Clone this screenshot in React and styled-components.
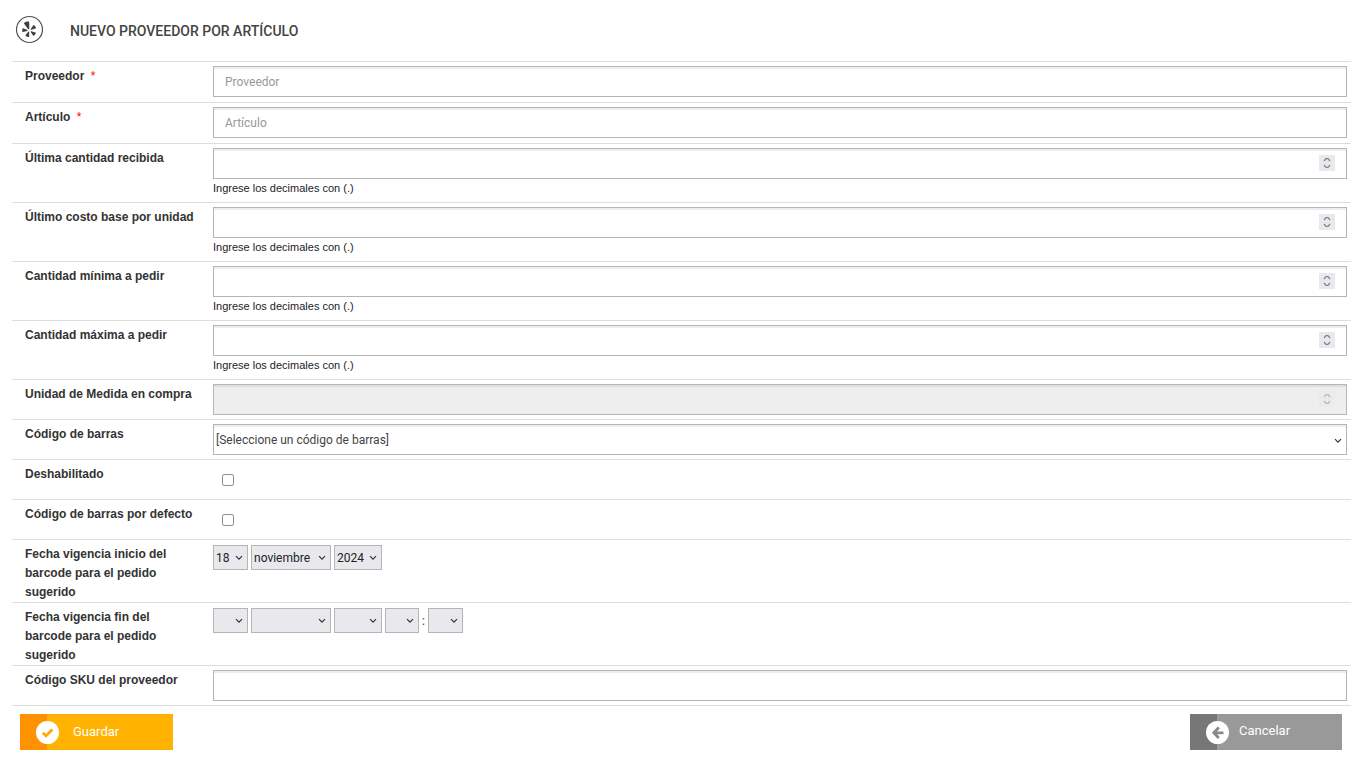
import React from "react";
import styled, { createGlobalStyle } from "styled-components";

const GlobalStyle = createGlobalStyle`
  *, *::before, *::after { box-sizing: border-box; }
  body {
    margin: 0;
    background: #fff;
    color: #333;
    font-family: Roboto, "Liberation Sans", sans-serif;
    font-size: 12px;
  }
`;

const Page = styled.main`
  padding: 12px 14px 24px 12px;
`;

const Header = styled.header`
  display: flex;
  align-items: center;
  gap: 26px;
  height: 34px;
  margin-bottom: 15px;
  padding-left: 3px;
`;

const Title = styled.h1`
  margin: 0;
  padding-top: 3px;
  font-size: 14px;
  font-weight: 500;
  line-height: 20px;
  color: #444;
  text-transform: uppercase;
`;

const Fields = styled.div`
  border-bottom: 1px solid #ddd;
`;

const Row = styled.div`
  display: grid;
  grid-template-columns: 188px minmax(0, 1fr);
  min-height: ${(p) => p.$height || 40}px;
  padding: 4px 4px 0 13px;
  border-top: 1px solid #ddd;
`;

const Label = styled.label`
  padding: 1px 16px 0 0;
  font-family: "Liberation Sans", sans-serif;
  font-size: 12px;
  font-weight: 700;
  line-height: 19px;
  color: #333;
`;

const Required = styled.span`
  margin-left: 3px;
  font-weight: 400;
  color: #f00;
`;

const Control = styled.div`
  position: relative;
  height: 31px;
`;

const Input = styled.input`
  display: block;
  width: 100%;
  height: 31px;
  margin: 0;
  padding: 0 11px;
  border: 1px solid #b5b5b5;
  border-radius: 0;
  background: #fff;
  box-shadow: inset 0 2px 0 #eee;
  color: #555;
  font: inherit;
  appearance: textfield;
  outline: none;

  &::placeholder { color: #999; opacity: 1; }
  &::-webkit-inner-spin-button { appearance: none; margin: 0; }
  &:disabled { background: #eee; box-shadow: inset 0 2px 0 #ddd; }
`;

const Spinner = styled.svg`
  position: absolute;
  top: 7px;
  right: 12px;
  width: 16px;
  height: 16px;
  background: #e9e9ed;
  opacity: ${(p) => (p.$muted ? 0.5 : 1)};
  pointer-events: none;
`;

const Help = styled.p`
  margin: 0;
  font-family: "Liberation Sans", sans-serif;
  font-size: 11px;
  line-height: 18px;
  color: #222;
`;

const SelectBox = styled.span`
  position: relative;
  display: block;
  width: ${(p) => p.$width || "100%"};
`;

const Select = styled.select`
  display: block;
  width: 100%;
  height: ${(p) => (p.$compact ? 25 : 31)}px;
  margin: 0;
  padding: 0 2px;
  border: 1px solid #b5b5b5;
  border-radius: 0;
  background: ${(p) => (p.$compact ? "#e9e9ed" : "#fff")};
  box-shadow: ${(p) => (p.$compact ? "none" : "inset 0 2px 0 #eee")};
  color: ${(p) => (p.$compact ? "#222" : "#444")};
  font: inherit;
  appearance: none;
  outline: none;
`;

const Chevron = styled.svg`
  position: absolute;
  top: ${(p) => (p.$compact ? 10 : 14)}px;
  right: 5px;
  width: 8px;
  height: 6px;
  pointer-events: none;
`;

const Checkbox = styled.input`
  appearance: none;
  display: block;
  width: 12px;
  height: 12px;
  margin: 10px 0 0 9px;
  border: 1px solid #8f8f9d;
  border-radius: 2px;
  background: #fff;

  &:checked { background: #0060df; }
`;

const DateGroup = styled.div`
  display: flex;
  align-items: center;
  gap: 3px;
  height: 25px;
  margin-top: 1px;
`;

const Actions = styled.footer`
  display: flex;
  justify-content: space-between;
  padding: 8px 9px 0 8px;
`;

const Button = styled.button`
  display: flex;
  align-items: center;
  gap: ${(p) => p.$gap}px;
  width: ${(p) => p.$width}px;
  height: 36px;
  padding: 0 0 0 16px;
  border: 0;
  background: linear-gradient(to right, ${(p) => p.$edge} 27px, ${(p) => p.$fill} 27px);
  color: #fff;
  font: inherit;
  font-size: 13px;
  line-height: 18px;
  cursor: pointer;
`;

const ButtonText = styled.span`
  padding-bottom: ${(p) => (p.$raised ? 3 : 0)}px;
`;

function Arrow({ compact }) {
  return (
    <Chevron $compact={compact} viewBox="0 0 8 6" aria-hidden="true">
      <path d="M1 1.2 4 4.2 7 1.2" fill="none" stroke="#333" strokeWidth="1.2" />
    </Chevron>
  );
}

function NumberField({ id, label, help, disabled }) {
  return (
    <Row $height={help ? 59 : 40}>
      <Label htmlFor={id}>{label}</Label>
      <div>
        <Control>
          <Input id={id} type="number" step="any" disabled={disabled} />
          <Spinner $muted={disabled} viewBox="0 0 16 16" aria-hidden="true">
            <path d="M5 6 7 3.6h2L11 6M5 10l2 2.4h2L11 10" fill="none" stroke="#83838f" strokeWidth="1.3" />
          </Spinner>
        </Control>
        {help && <Help>Ingrese los decimales con (.)</Help>}
      </div>
    </Row>
  );
}

function SearchField({ id, label }) {
  return (
    <Row $height={41}>
      <Label htmlFor={id}>{label} <Required>*</Required></Label>
      <Input id={id} type="text" placeholder={label} required />
    </Row>
  );
}

function CheckField({ id, label }) {
  return (
    <Row>
      <Label htmlFor={id}>{label}</Label>
      <div><Checkbox id={id} type="checkbox" /></div>
    </Row>
  );
}

function DateSelect({ id, name, width, value = "" }) {
  return (
    <SelectBox $width={width}>
      <Select $compact id={id} aria-label={name} defaultValue={value}>
        <option value={value}>{value}</option>
      </Select>
      <Arrow compact />
    </SelectBox>
  );
}

export default function App() {
  return (
    <>
      <GlobalStyle />
      <Page>
        <Header>
          <svg width="29" height="29" viewBox="0 0 29 29" aria-hidden="true">
            <circle cx="14.5" cy="14.5" r="13" fill="#fff" stroke="#505050" strokeWidth="1.2" />
            <g fill="#3f3f46">
              <path d="M9.3 7.8c1.1-.9 2.7-1.4 4.2-1.3.4 0 .7.3.7.7l.1 6.3c0 .9-.9 1.1-1.3.4L9.1 8.7c-.2-.3-.1-.7.2-.9Z" />
              <path d="m8.1 13.2 4 1.6c.6.2.6 1 0 1.2l-4 1.1c-.5.1-.8-.1-.8-.6-.1-1 0-2 .2-3 .1-.3.3-.4.6-.3Z" />
              <path d="M13.2 16.8c.4-.4 1-.2 1 .4l-.1 4.3c0 .4-.3.6-.7.5-1-.2-1.9-.6-2.7-1.1-.3-.2-.3-.6-.1-.9Z" />
              <path d="m16.2 16.2 4.2 1.3c.4.1.6.5.4.8-.4.9-1 1.8-1.8 2.4-.3.3-.7.2-.9-.1l-2.4-3.6c-.3-.5 0-1 .5-.8Z" />
              <path d="m15.7 13.9 2.5-3.5c.2-.3.6-.4.9-.1.8.6 1.4 1.4 1.8 2.4.1.4 0 .7-.4.8l-4.2 1.2c-.6.1-.9-.3-.6-.8Z" />
            </g>
          </svg>
          <Title>Nuevo proveedor por artículo</Title>
        </Header>

        <form onSubmit={(e) => e.preventDefault()}>
          <Fields>
            <SearchField id="proveedor" label="Proveedor" />
            <SearchField id="articulo" label="Artículo" />
            <NumberField id="ultima-cantidad" label="Última cantidad recibida" help />
            <NumberField id="ultimo-costo" label="Último costo base por unidad" help />
            <NumberField id="cantidad-minima" label="Cantidad mínima a pedir" help />
            <NumberField id="cantidad-maxima" label="Cantidad máxima a pedir" help />
            <NumberField id="unidad-medida" label="Unidad de Medida en compra" disabled />
            <Row>
              <Label htmlFor="codigo-barras">Código de barras</Label>
              <SelectBox>
                <Select id="codigo-barras">
                  <option>[Seleccione un código de barras]</option>
                </Select>
                <Arrow />
              </SelectBox>
            </Row>
            <CheckField id="deshabilitado" label="Deshabilitado" />
            <CheckField id="por-defecto" label="Código de barras por defecto" />
            <Row>
              <Label htmlFor="inicio-dia">Fecha vigencia inicio del barcode para el pedido sugerido</Label>
              <DateGroup>
                <DateSelect id="inicio-dia" name="Día de inicio" width="35px" value="18" />
                <DateSelect id="inicio-mes" name="Mes de inicio" width="80px" value="noviembre" />
                <DateSelect id="inicio-anio" name="Año de inicio" width="48px" value="2024" />
              </DateGroup>
            </Row>
            <Row>
              <Label htmlFor="fin-dia">Fecha vigencia fin del barcode para el pedido sugerido</Label>
              <DateGroup>
                <DateSelect id="fin-dia" name="Día de fin" width="35px" />
                <DateSelect id="fin-mes" name="Mes de fin" width="80px" />
                <DateSelect id="fin-anio" name="Año de fin" width="48px" />
                <DateSelect id="fin-hora" name="Hora de fin" width="34px" />
                <span>:</span>
                <DateSelect id="fin-minuto" name="Minuto de fin" width="35px" />
              </DateGroup>
            </Row>
            <Row>
              <Label htmlFor="sku">Código SKU del proveedor</Label>
              <Input id="sku" type="text" />
            </Row>
          </Fields>

          <Actions>
            <Button type="submit" $width={153} $edge="#ff9203" $fill="#ffb300" $gap={14}>
              <svg width="23" height="23" viewBox="0 0 23 23" aria-hidden="true">
                <circle cx="11.5" cy="11.5" r="11.5" fill="#fff" />
                <path d="m6.8 11.8 3.2 3 6.4-6.4" fill="none" stroke="#ffab00" strokeWidth="2.8" />
              </svg>
              <ButtonText>Guardar</ButtonText>
            </Button>
            <Button type="button" $width={152} $edge="#777" $fill="#999" $gap={10}>
              <svg width="23" height="23" viewBox="0 0 23 23" aria-hidden="true">
                <circle cx="11.5" cy="11.5" r="11.5" fill="#fff" />
                <path d="M12.8 6.5 7.8 11.8l5 5.2M8 11.8h9.5" fill="none" stroke="#888" strokeWidth="2.8" />
              </svg>
              <ButtonText $raised>Cancelar</ButtonText>
            </Button>
          </Actions>
        </form>
      </Page>
    </>
  );
}
